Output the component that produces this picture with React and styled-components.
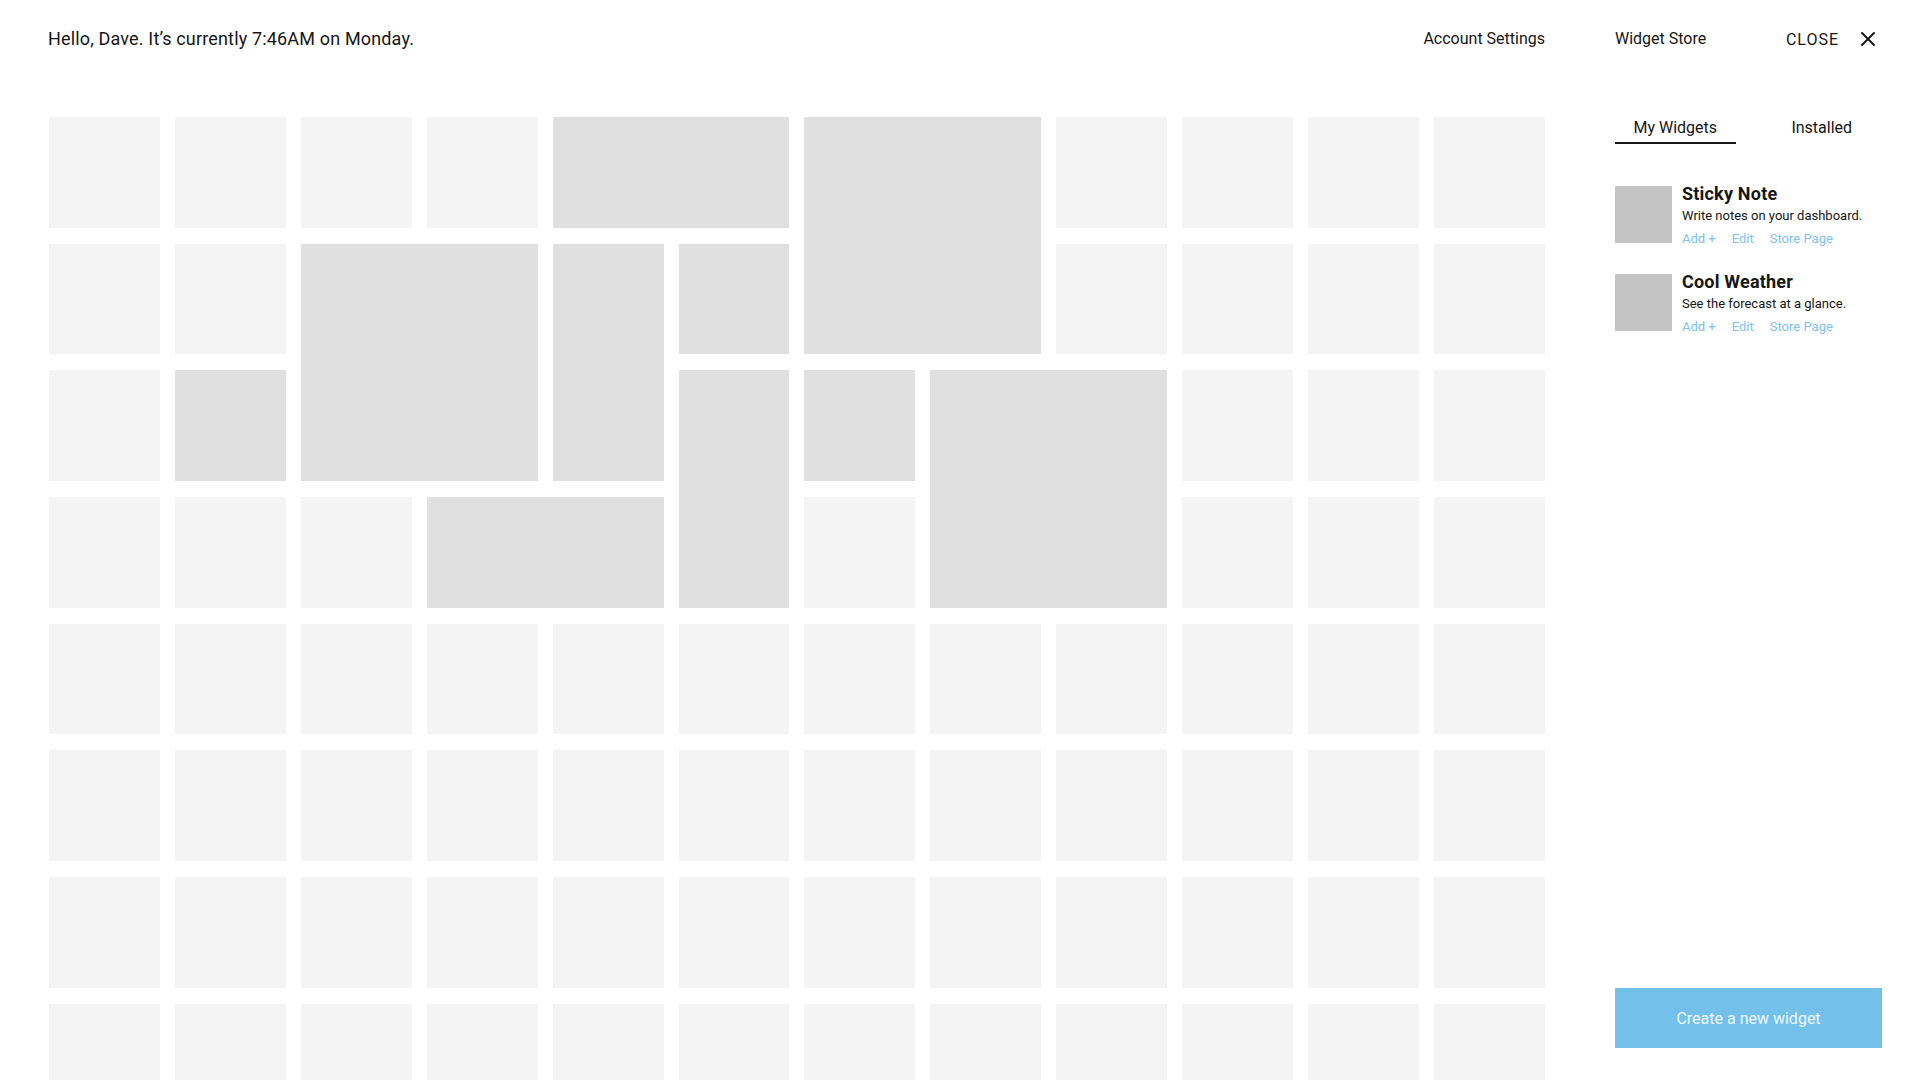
import React from 'react';
import styled, { createGlobalStyle } from 'styled-components';
import { X } from 'lucide-react';

const GlobalStyle = createGlobalStyle`
  html, body {
    margin: 0;
    padding: 0;
    background: #ffffff;
    overflow: hidden;
  }
  body {
    font-family: Roboto, "Noto Sans", sans-serif;
    color: #161616;
  }
  * {
    box-sizing: border-box;
  }
`;

const Page = styled.div`
  display: grid;
  grid-template-columns: 1497px 267px;
  grid-template-rows: 24px minmax(0, 1fr);
  column-gap: 70px;
  row-gap: 66px;
  height: 100vh;
  padding: 27px 38px 32px 48px;
`;

const HeaderBar = styled.header`
  display: flex;
  align-items: center;
  justify-content: space-between;
  line-height: 24px;
  padding-right: ${(p) => p.$inset || 0}px;
`;

const Greeting = styled.h1`
  margin: 0;
  font-size: 18px;
  font-weight: 400;
  line-height: 24px;
  letter-spacing: 0.16px;
`;

const NavLink = styled.a`
  font-size: 16px;
  color: #161616;
  text-decoration: none;
  cursor: pointer;
`;

const CloseButton = styled.button`
  display: flex;
  align-items: center;
  gap: 17px;
  border: 0;
  background: none;
  padding: 0;
  font-family: inherit;
  font-size: 16px;
  letter-spacing: 1px;
  color: #161616;
  cursor: pointer;
`;

const TileGrid = styled.div`
  display: grid;
  grid-template-columns: repeat(12, 1fr);
  grid-auto-rows: 110.7px;
  column-gap: 15px;
  row-gap: 16px;
  align-content: start;
  margin-left: 1px;
`;

const Tile = styled.div`
  background: ${(p) => (p.$filled ? '#e0e0e0' : '#f4f4f4')};
  grid-column: ${(p) => (p.$col ? `${p.$col} / span ${p.$w}` : 'auto')};
  grid-row: ${(p) => (p.$row ? `${p.$row} / span ${p.$h}` : 'auto')};
`;

const Sidebar = styled.aside`
  display: flex;
  flex-direction: column;
  min-height: 0;
`;

const Tabs = styled.div`
  display: flex;
  gap: 26px;
  margin-top: -1px;
`;

const Tab = styled.button`
  width: 125px;
  padding: 0 0 2px;
  border: 0;
  border-bottom: 2px solid ${(p) => (p.$active ? '#161616' : 'transparent')};
  background: none;
  font-family: inherit;
  font-size: 16px;
  line-height: 24px;
  color: #161616;
  text-align: center;
  cursor: pointer;
`;

const WidgetList = styled.ul`
  list-style: none;
  margin: 42px 0 0;
  padding: 0;
  display: flex;
  flex-direction: column;
  gap: 31px;
`;

const WidgetItem = styled.li`
  display: flex;
  gap: 10px;
  height: 57px;
`;

const Thumb = styled.div`
  width: 57px;
  height: 57px;
  flex-shrink: 0;
  background: #c4c4c4;
`;

const WidgetInfo = styled.div`
  display: flex;
  flex-direction: column;
  margin-top: -2px;
`;

const WidgetTitle = styled.h3`
  margin: 0;
  font-size: 18px;
  font-weight: 700;
  line-height: 20px;
  letter-spacing: 0.2px;
`;

const WidgetDesc = styled.p`
  margin: 3px 0 0;
  font-size: 13px;
  line-height: 18px;
`;

const Actions = styled.div`
  display: flex;
  gap: 16px;
  margin-top: 5px;
  font-size: 13px;
  line-height: 18px;
`;

const ActionLink = styled.a`
  color: #7cc2f0;
  text-decoration: none;
  cursor: pointer;
`;

const CreateButton = styled.button`
  margin-top: auto;
  width: 100%;
  height: 60px;
  border: 0;
  background: #73c0eb;
  color: #eef7fd;
  font-family: inherit;
  font-size: 16px;
  cursor: pointer;
`;

const featured = [
  { col: 5, row: 1, w: 2, h: 1 },
  { col: 7, row: 1, w: 2, h: 2 },
  { col: 3, row: 2, w: 2, h: 2 },
  { col: 5, row: 2, w: 1, h: 2 },
  { col: 6, row: 2, w: 1, h: 1 },
  { col: 2, row: 3, w: 1, h: 1 },
  { col: 6, row: 3, w: 1, h: 2 },
  { col: 7, row: 3, w: 1, h: 1 },
  { col: 8, row: 3, w: 2, h: 2 },
  { col: 4, row: 4, w: 2, h: 1 },
];

const COLS = 12;
const ROWS = 8;
const usedCells = featured.reduce((sum, t) => sum + t.w * t.h, 0);
const emptyCount = COLS * ROWS - usedCells;

const widgets = [
  { name: 'Sticky Note', desc: 'Write notes on your dashboard.' },
  { name: 'Cool Weather', desc: 'See the forecast at a glance.' },
];

export default function App() {
  return (
    <>
      <GlobalStyle />
      <Page>
        <HeaderBar>
          <Greeting>Hello, Dave. It’s currently 7:46AM on Monday.</Greeting>
          <NavLink>Account Settings</NavLink>
        </HeaderBar>
        <HeaderBar $inset={2}>
          <NavLink>Widget Store</NavLink>
          <CloseButton>
            CLOSE
            <X size={24} strokeWidth={2} />
          </CloseButton>
        </HeaderBar>

        <TileGrid>
          {featured.map((t, i) => (
            <Tile key={`f${i}`} $filled $col={t.col} $row={t.row} $w={t.w} $h={t.h} />
          ))}
          {Array.from({ length: emptyCount }, (_, i) => (
            <Tile key={`e${i}`} />
          ))}
        </TileGrid>

        <Sidebar>
          <Tabs>
            <Tab $active>My Widgets</Tab>
            <Tab>Installed</Tab>
          </Tabs>
          <WidgetList>
            {widgets.map((w) => (
              <WidgetItem key={w.name}>
                <Thumb />
                <WidgetInfo>
                  <WidgetTitle>{w.name}</WidgetTitle>
                  <WidgetDesc>{w.desc}</WidgetDesc>
                  <Actions>
                    <ActionLink>Add +</ActionLink>
                    <ActionLink>Edit</ActionLink>
                    <ActionLink>Store Page</ActionLink>
                  </Actions>
                </WidgetInfo>
              </WidgetItem>
            ))}
          </WidgetList>
          <CreateButton>Create a new widget</CreateButton>
        </Sidebar>
      </Page>
    </>
  );
}
